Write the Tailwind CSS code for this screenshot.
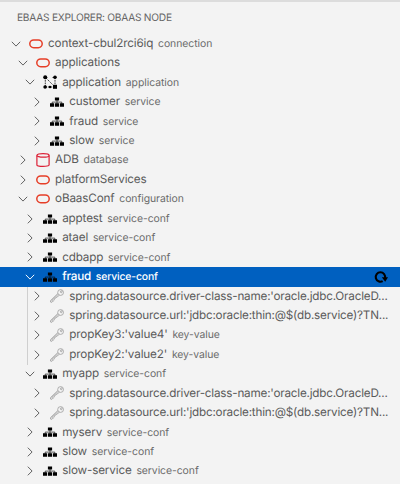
<!DOCTYPE html>
<html lang="en">
<head>
<meta charset="utf-8">
<title>eBaaS Explorer</title>
<script src="https://cdn.jsdelivr.net/npm/@tailwindcss/browser@4"></script>
</head>
<body class="h-[484px] w-[400px] overflow-hidden border-t-2 border-[#dcdcdc] bg-[#f3f3f3] font-['Inter','Liberation_Sans',sans-serif] text-[#5a5a5a] [text-rendering:geometricPrecision]">
<svg class="hidden">
  <symbol id="down" viewBox="0 0 12 12"><path d="M1.8 3.8 6 8.1 10.2 3.8" fill="none" stroke="currentColor" stroke-width=".95"/></symbol>
  <symbol id="right" viewBox="0 0 12 12"><path d="M3.8 1.7 8.1 6 3.8 10.3" fill="none" stroke="currentColor" stroke-width=".95"/></symbol>
  <symbol id="oracle" viewBox="0 0 14 14"><rect x=".8" y="2.9" width="12.4" height="7.8" rx="3.9" fill="none" stroke="#e63e27" stroke-width="1.5"/></symbol>
  <symbol id="db" viewBox="0 0 14 14"><path d="M.9 2.5V11.9C.9 13.8 13.1 13.8 13.1 11.9V2.5" fill="none" stroke="#dc2036" stroke-width="1.2"/><ellipse cx="7" cy="2.4" rx="6.1" ry="1.8" fill="none" stroke="#dc2036" stroke-width="1.2"/></symbol>
  <symbol id="app" viewBox="0 0 14 14"><path d="M2.3 2.5V12M12 2.5V12M2.3 12H12M3 3 11.5 11.5M2.3 2.5H5M9.5 2.5H12" fill="none" stroke="#111" stroke-width=".8" stroke-dasharray="1.7 .8"/><circle cx="2.2" cy="2.2" r="2"/><circle cx="12" cy="2.3" r="1.8"/><circle cx="2.1" cy="12" r="1.8"/><circle cx="7" cy="12" r="1.3"/><rect x="10" y="9.8" width="4" height="4"/></symbol>
  <symbol id="service" viewBox="0 0 14 14"><path d="M4.9 2.4h4.2v3.2H4.9zM0 8.3h4.1v3.4H0zM4.95 8.3h4.1v3.4h-4.1zM9.9 8.3H14v3.4H9.9z"/><path d="M7 5v4M2.2 9V7.1h9.6V9" fill="none" stroke="#000" stroke-width=".65"/></symbol>
  <symbol id="key" viewBox="0 0 14 14"><g fill="none" stroke="#929292" stroke-width=".7" stroke-linejoin="round"><circle cx="10.6" cy="3.5" r="2.9"/><circle cx="11.3" cy="2.8" r=".9"/><path d="M7.8 4.6.4 11.7l.2 1.4 1.4.2.6-.6-.2-.9 1 .1.9-.8-.2-.9L9.5 6.2M7.9 5.7 1.4 11.8"/></g></symbol>
  <symbol id="refresh" viewBox="0 0 14 14"><path d="M8.7 11.1A4.7 4.7 0 1 1 11 8.1" fill="none" stroke="#000" stroke-width="2.1"/><path d="M7.8 7.3H14l-2.8 4.4z"/></symbol>
</svg>
<h1 class="flex h-[31.9px] items-center pt-px pl-[17px] text-[10.2px] tracking-[-0.25px] text-[#666]">EBAAS EXPLORER: OBAAS NODE</h1>
<main id="tree" class="relative"></main>
<script>
const rows = [
  [0,'down','oracle','context-cbul2rci6iq','connection'],
  [1,'down','oracle','applications',''],
  [2,'down','app','application','application'],
  [3,'right','service','customer','service'],
  [3,'right','service','fraud','service'],
  [3,'right','service','slow','service'],
  [1,'right','db','ADB','database'],
  [1,'right','oracle','platformServices',''],
  [1,'down','oracle','oBaasConf','configuration'],
  [2,'right','service','apptest','service-conf'],
  [2,'right','service','atael','service-conf'],
  [2,'right','service','cdbapp','service-conf'],
  [2,'down','service','fraud','service-conf',true],
  [3,'right','key',"spring.datasource.driver-class-name:'oracle.jdbc.OracleD...",''],
  [3,'right','key',"spring.datasource.url:'jdbc:oracle:thin:@$(db.service)?TN...",''],
  [3,'right','key',"propKey3:'value4'",'key-value'],
  [3,'right','key',"propKey2:'value2'",'key-value'],
  [2,'down','service','myapp','service-conf'],
  [3,'right','key',"spring.datasource.driver-class-name:'oracle.jdbc.OracleD...",''],
  [3,'right','key',"spring.datasource.url:'jdbc:oracle:thin:@$(db.service)?TN...",''],
  [2,'right','service','myserv','service-conf'],
  [2,'right','service','slow','service-conf'],
  [2,'right','service','slow-service','service-conf'],
];
document.getElementById('tree').innerHTML = rows.map(([depth, arrow, icon, label, kind, selected]) => `
  <div class="${selected ? 'flex h-[19.45px] items-center whitespace-nowrap bg-[#0060c0] text-white' : 'flex h-[19.45px] items-center whitespace-nowrap'}" style="padding-left:${10 + depth * 7.1}px">
    <svg class="size-3 shrink-0"><use href="#${arrow}"/></svg>
    <svg class="ml-[6.5px] size-3.5 shrink-0"><use href="#${icon}"/></svg>
    <span class="${selected ? 'ml-[5.5px] text-[11.7px] font-medium tracking-[-0.2px]' : label.length > 50 ? 'ml-[5.5px] text-[11.7px] tracking-[-0.2px]' : 'ml-[5.5px] text-[11.7px] tracking-[-0.15px]'}">${label}</span>
    <span class="${selected ? 'ml-[4.8px] text-[10.4px] font-medium tracking-[-0.15px]' : 'ml-[4.8px] text-[10.4px] tracking-[-0.05px] text-[#6b6b6b]'}">${kind}</span>
    ${selected ? '<svg class="mr-[12px] ml-auto size-3.5 shrink-0"><use href="#refresh"/></svg>' : ''}
  </div>`).join('') + '<div class="absolute top-[252.8px] left-[27px] h-[78px] w-px bg-[#cfcfcf]"></div>';
</script>
</body>
</html>
